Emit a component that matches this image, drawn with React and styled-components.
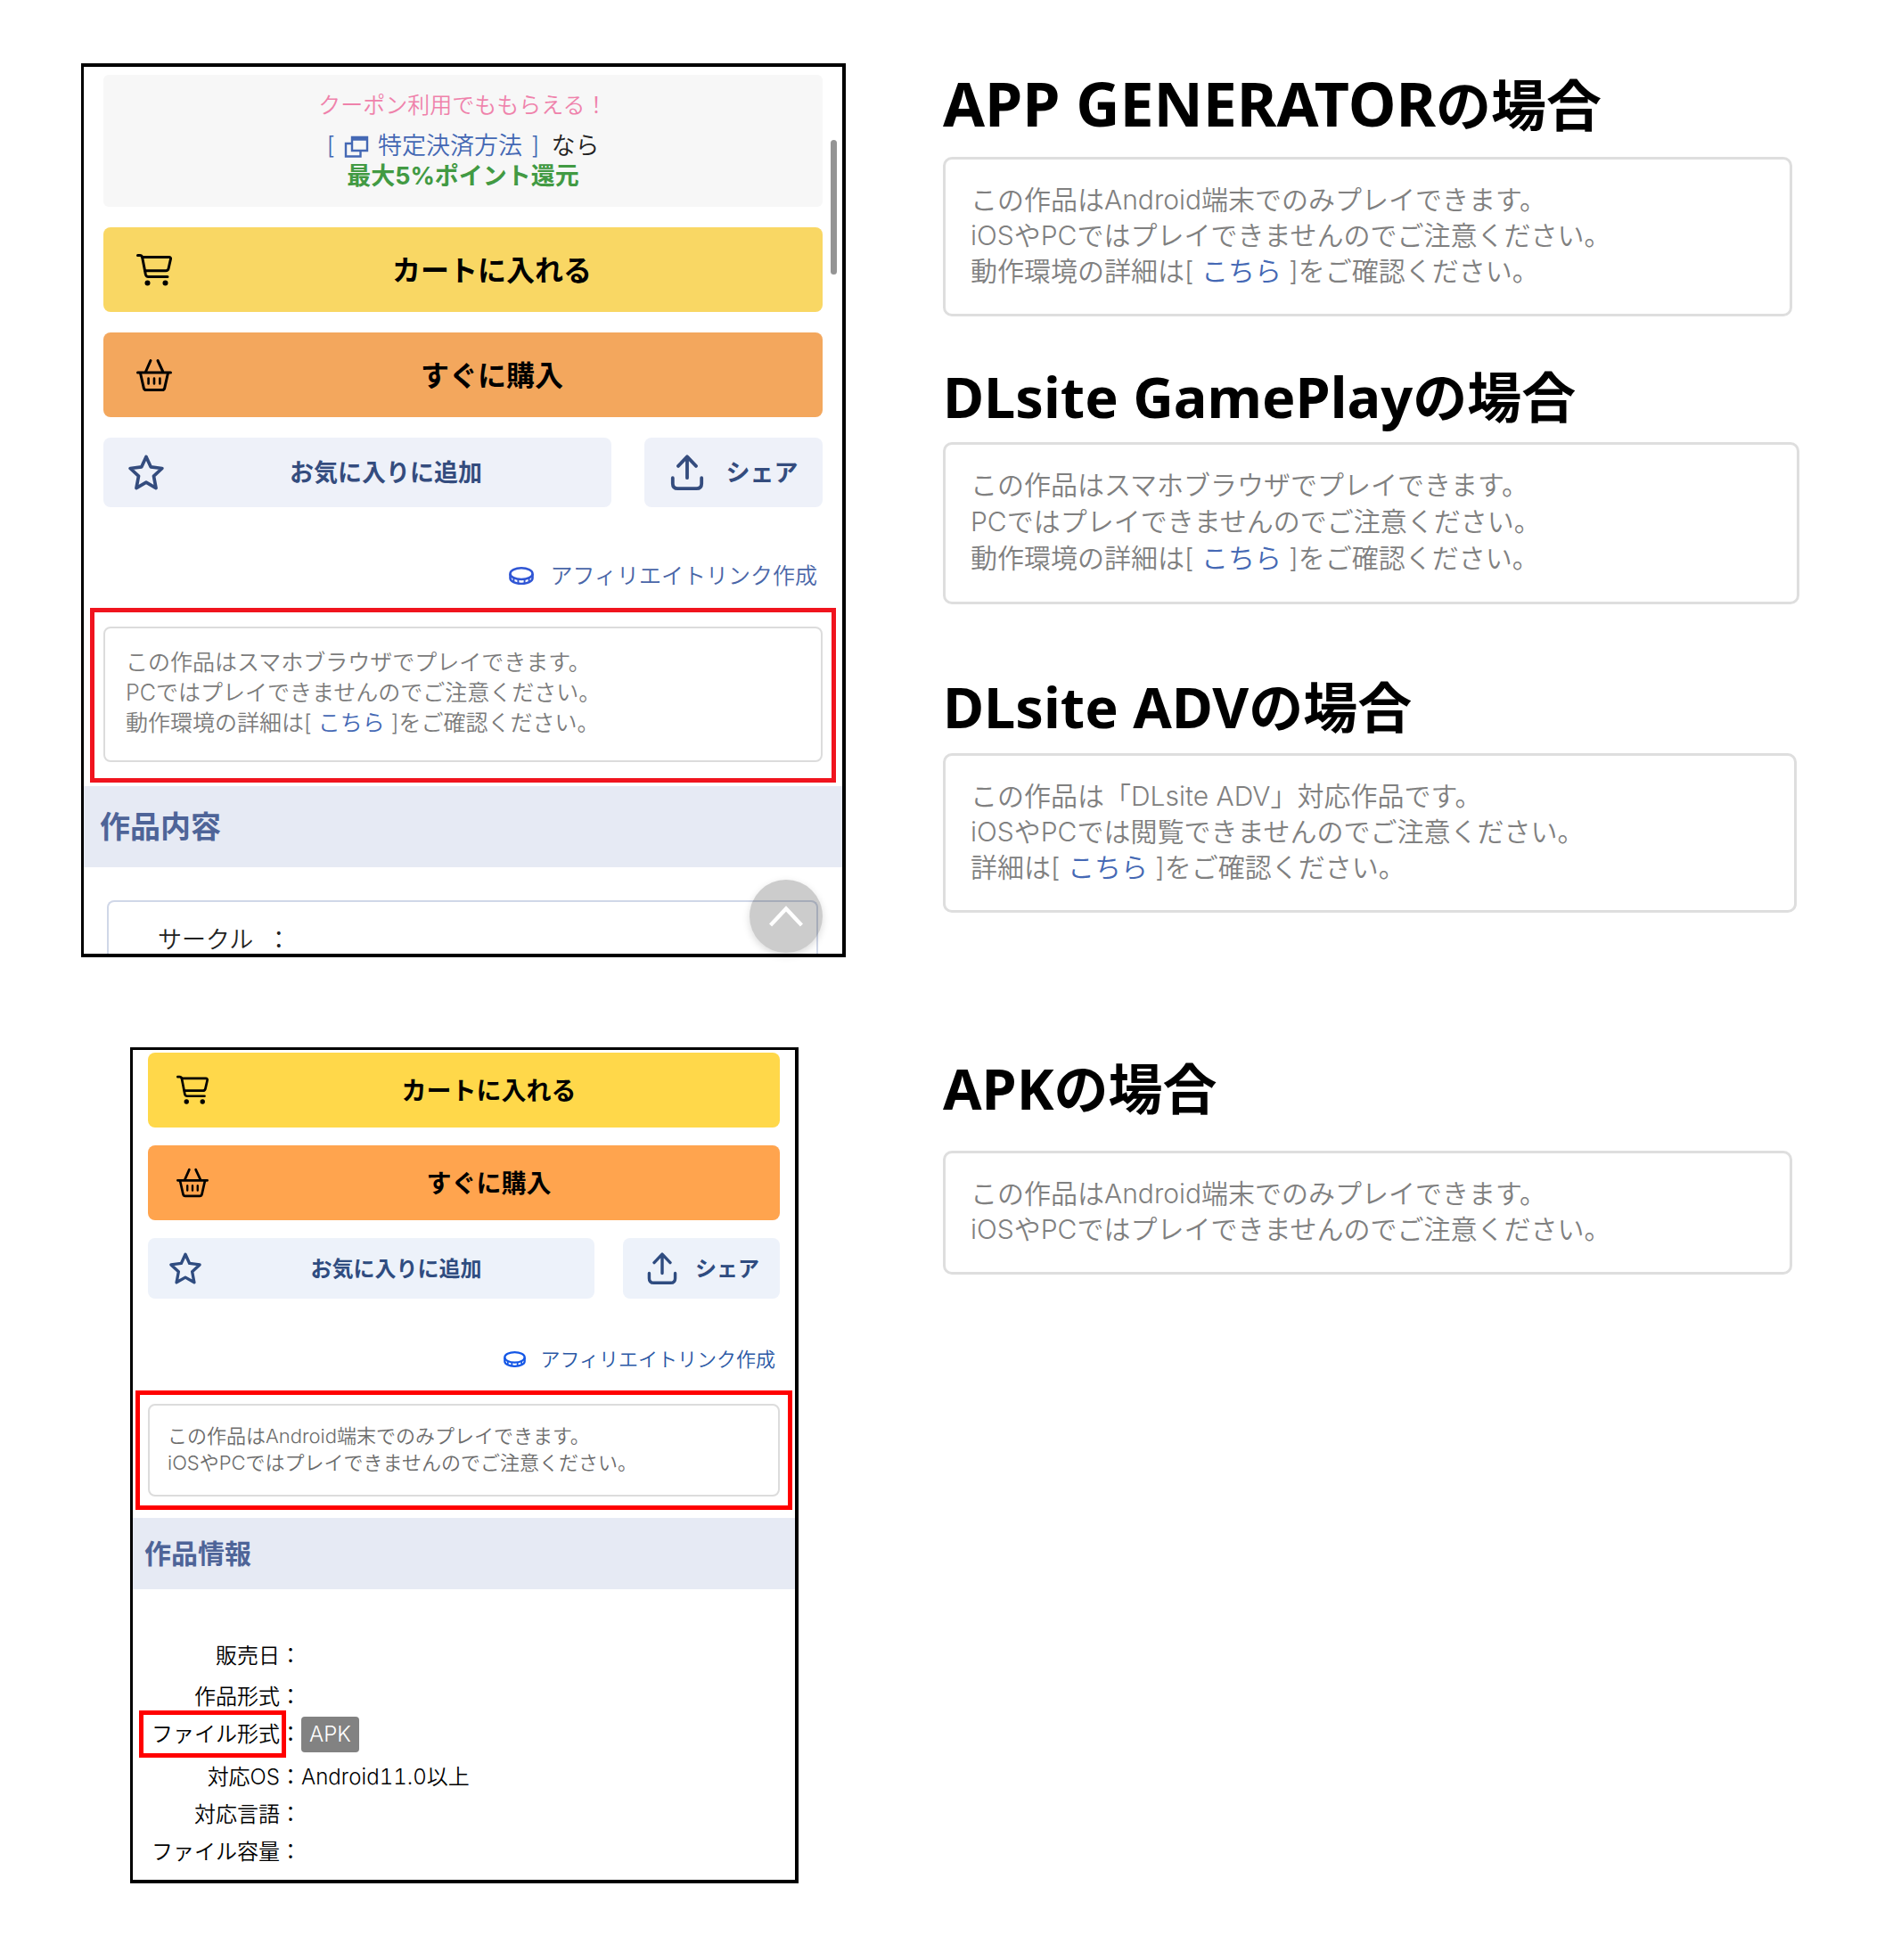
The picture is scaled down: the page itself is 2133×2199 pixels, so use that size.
import styled, { createGlobalStyle, ThemeProvider } from 'styled-components';

const large = {
    gap: 23,
    padTop: 9,
    padSide: 22,
    buy: 95,
    sub: 78,
    share: 200,
    subGap: 37,
    label: 32,
    text: 27,
    small: 25,
    line: 34,
    icon: 40,
    cartPad: 37,
    starPad: 28,
    sharePad: 28,
    linkMargin: '60px 28px 19px',
    linkGap: 18,
    coinWidth: 28,
    markMargin: '0 7px',
    markPad: '16px 10px 18px',
    notePad: '21px 23px 25px',
    bandTop: 4,
    band: 91,
    bandText: 34,
    yellow: '#f9d764',
    orange: '#f3a75d',
    pale: '#eef1f9',
    navy: '#344c7e',
    link: '#4a66a8',
    coin: '#2f55d4',
    red: '#f0141e',
    note: '#7b7b7b',
};

const small = {
    gap: 20,
    padTop: 3,
    padSide: 17,
    buy: 84,
    sub: 68,
    share: 176,
    subGap: 32,
    label: 28,
    text: 24,
    small: 22,
    line: 30,
    icon: 36,
    cartPad: 32,
    starPad: 24,
    sharePad: 26,
    linkMargin: '53px 22px 20px',
    linkGap: 16,
    coinWidth: 25,
    markMargin: '0 3px',
    markPad: '10px 9px',
    notePad: '19px 20px 21px',
    bandTop: 9,
    band: 80,
    bandText: 30,
    yellow: '#ffd84a',
    orange: '#ffa44e',
    pale: '#edf2fa',
    navy: '#2f4c80',
    link: '#2a58a5',
    coin: '#1457e6',
    red: '#ff0000',
    note: '#6c6c6c',
};

const detalhes = [
    { label: '販売日', space: 4 },
    { label: '作品形式' },
    { label: 'ファイル形式', badge: 'APK', marked: true, space: 6 },
    { label: '対応OS', value: 'Android11.0以上' },
    { label: '対応言語' },
    { label: 'ファイル容量' },
];

function CartIcon() {
    return (
        <Icon viewBox="0 0 40 36" fill="none" stroke="currentColor" strokeWidth="3" strokeLinecap="round" strokeLinejoin="round">
            <path d="M1.5 1.5H4Q6 1.5 6.6 3.5H36.5Q39 3.5 38.4 6L36 16.5Q35.5 18.8 33 18.8H10" />
            <path d="M6.6 3.5L10.4 23Q11 25.5 13.5 25.5H35" />
            <circle cx="12.5" cy="32.5" r="3" fill="currentColor" stroke="none" />
            <circle cx="32.5" cy="32.5" r="3" fill="currentColor" stroke="none" />
        </Icon>
    );
}

function BasketIcon() {
    return (
        <Icon viewBox="0 0 40 36" fill="none" stroke="currentColor" strokeWidth="3" strokeLinecap="round" strokeLinejoin="round">
            <path d="M1.5 15H38.5M16 1.5L10.5 14M24 1.5L29.8 14" />
            <path d="M4.5 15.5L8.3 32.3Q8.8 34.5 11 34.5H29Q31.2 34.5 31.7 32.3L35.5 15.5" />
            <path d="M13.6 21.5V27.5M20 21.5V27.5M26.4 21.5V27.5" strokeWidth="2.6" />
        </Icon>
    );
}

function StarIcon() {
    return (
        <Icon viewBox="0 0 41 41" fill="none" stroke="currentColor" strokeWidth="3.8" strokeLinejoin="round">
            <path d="M20.5 2.5L25.8 14.2L38.8 15.9L29.2 24.8L31.8 38.5L20.5 32L9.2 38.5L11.8 24.8L2.2 15.9L15.2 14.2Z" />
        </Icon>
    );
}

function ShareIcon() {
    return (
        <Icon viewBox="0 0 38 42" fill="none" stroke="currentColor" strokeWidth="4" strokeLinecap="round" strokeLinejoin="round">
            <path d="M19 27.5V2.5M8.5 13.5L19 2.5L29.5 13.5" />
            <path d="M2 27.5V34Q2 40 8 40H30Q36 40 36 34V27.5" />
        </Icon>
    );
}

function CoinIcon() {
    return (
        <Coin viewBox="0 0 29 21" fill="none" stroke="currentColor" strokeWidth="2.6">
            <ellipse cx="14.5" cy="8" rx="13" ry="6.6" />
            <path d="M1.5 8V13C1.5 17 7.5 19.6 14.5 19.6S27.5 17 27.5 13V8" />
            <path d="M5.6 13V17M10.8 14.5V19M18.2 14.5V19M23.4 13V17" strokeWidth="2" />
        </Coin>
    );
}

function WindowIcon() {
    return (
        <PopIcon viewBox="0 0 28 25" fill="none" stroke="currentColor" strokeWidth="2.4">
            <path d="M9 2H26V17H9Z" />
            <path d="M8 3.5H27" strokeWidth="4.5" />
            <path d="M8 9H2V23.5H18.5V18" />
        </PopIcon>
    );
}

function Compra() {
    return (
        <>
            <BuyButton type="button" $color="yellow"><CartIcon /><span>カートに入れる</span></BuyButton>
            <BuyButton type="button" $color="orange"><BasketIcon /><span>すぐに購入</span></BuyButton>
            <SubRow>
                <FavButton type="button"><StarIcon /><span>お気に入りに追加</span></FavButton>
                <ShareButton type="button"><ShareIcon /><span>シェア</span></ShareButton>
            </SubRow>
        </>
    );
}

function Afiliado() {
    return <AffiliateLink href="#affiliate"><CoinIcon />アフィリエイトリンク作成</AffiliateLink>;
}

function Kochira() {
    return <>[ <a href="#environment">こちら</a> ]</>;
}

function BrowserNote() {
    return (
        <>
            この作品はスマホブラウザでプレイできます。<br />
            PCではプレイできませんのでご注意ください。<br />
            動作環境の詳細は<Kochira />をご確認ください。
        </>
    );
}

function AndroidNote() {
    return (
        <>
            この作品はAndroid端末でのみプレイできます。<br />
            iOSやPCではプレイできませんのでご注意ください。
        </>
    );
}

export default function App() {
    return (
        <Page>
            <GlobalStyle />
            <ThemeProvider theme={large}>
                <Panel>
                    <Body>
                        <Coupon>
                            <Pink>クーポン利用でももらえる！</Pink>
                            <Method>
                                <MethodLink href="#payment">
                                    <span>[</span><WindowIcon /><span>特定決済方法</span><span>]</span>
                                </MethodLink>
                                <span>なら</span>
                            </Method>
                            <Green>最大5%ポイント還元</Green>
                        </Coupon>
                        <Compra />
                    </Body>
                    <Afiliado />
                    <Mark><Note><BrowserNote /></Note></Mark>
                    <Band>作品内容</Band>
                    <Circle><span>サークル</span><span>：</span></Circle>
                    <ScrollThumb />
                    <TopButton type="button" aria-label="ページの先頭へ">
                        <svg width="38" height="24" viewBox="0 0 38 24" fill="none" stroke="#fff" strokeWidth="4.4">
                            <path d="M1.5 22L19 3.5L36.5 22" />
                        </svg>
                    </TopButton>
                </Panel>
            </ThemeProvider>

            <Cases>
                <Title $big><Latin $big>APP GENERATOR</Latin>の場合</Title>
                <CaseNote $top={25} $right={8}>
                    <AndroidNote /><br />
                    動作環境の詳細は<Kochira />をご確認ください。
                </CaseNote>
                <Title $top={52}><Latin>DLsite GamePlay</Latin>の場合</Title>
                <CaseNote $top={17} $right={0} $loose><BrowserNote /></CaseNote>
                <Title $top={77}><Latin>DLsite ADV</Latin>の場合</Title>
                <CaseNote $top={18} $right={3}>
                    この作品は「DLsite ADV」対応作品です。<br />
                    iOSやPCでは閲覧できませんのでご注意ください。<br />
                    詳細は<Kochira />をご確認ください。
                </CaseNote>
            </Cases>

            <ThemeProvider theme={small}>
                <Panel $inset>
                    <Body><Compra /></Body>
                    <Afiliado />
                    <Mark><Note><AndroidNote /></Note></Mark>
                    <Band>作品情報</Band>
                    <Details>
                        <tbody>
                            {detalhes.map((item) => (
                                <Row key={item.label} $space={item.space || 0}>
                                    <th scope="row"><Label $marked={item.marked}>{item.label}</Label>：</th>
                                    <td>{item.badge ? <Badge>{item.badge}</Badge> : item.value}</td>
                                </Row>
                            ))}
                        </tbody>
                    </Details>
                </Panel>
            </ThemeProvider>

            <Cases>
                <Title><Latin>APK</Latin>の場合</Title>
                <CaseNote $top={36} $right={8}><AndroidNote /></CaseNote>
            </Cases>
        </Page>
    );
}

const GlobalStyle = createGlobalStyle`
    * {
        box-sizing: border-box;
    }
    body {
        margin: 0;
        background: #fff;
        color: #000;
        font-family: Inter, "Noto Sans CJK JP", sans-serif;
        font-weight: 350;
    }
    a {
        color: #4468b4;
        text-decoration: none;
    }
    button {
        border: 0;
        padding: 0;
        font-family: inherit;
        cursor: pointer;
    }
`

const Page = styled.main`
    display: grid;
    grid-template-columns: minmax(0, 858fr) minmax(0, 961fr);
    column-gap: 109px;
    row-gap: 101px;
    align-items: start;
    padding: 71px 114px 86px 91px;
`

const Panel = styled.section`
    position: relative;
    margin: ${(p) => (p.$inset ? '0 53px 0 55px' : '0')};
    border: 4px solid #000;
    border-left-width: 3px;
    border-top-width: ${(p) => (p.$inset ? '3px' : '4px')};
    background: #fff;
`

const Body = styled.div`
    display: flex;
    flex-direction: column;
    gap: ${(p) => p.theme.gap}px;
    padding: ${(p) => p.theme.padTop}px ${(p) => p.theme.padSide}px 0;
`

const Coupon = styled.div`
    background: #f7f7f7;
    border-radius: 6px;
    padding: 17px 0;
    text-align: center;
    font-size: 27px;
    line-height: 34px;
`

const Pink = styled.div`
    font-size: 25px;
    color: #ef82ab;
`

const Method = styled.div`
    display: flex;
    justify-content: center;
    gap: 13px;
    margin-top: 12px;
    color: #222;
`

const MethodLink = styled.a`
    display: flex;
    align-items: center;
    gap: 10px;
`

const Green = styled.div`
    font-weight: 700;
    color: #429a43;
`

const PopIcon = styled.svg`
    width: 28px;
    height: 25px;
`

const Icon = styled.svg`
    flex: none;
    width: ${(p) => p.theme.icon}px;
    height: ${(p) => p.theme.icon}px;
`

const Action = styled.button`
    display: flex;
    align-items: center;
    border-radius: 8px;
    white-space: nowrap;

    span {
        flex: 1;
        padding-bottom: 3px;
        text-align: center;
    }
`

const BuyButton = styled(Action)`
    height: ${(p) => p.theme.buy}px;
    padding: 0 12px 0 ${(p) => p.theme.cartPad}px;
    background: ${(p) => p.theme[p.$color]};
    color: #000;
    font-size: ${(p) => p.theme.label}px;
    font-weight: 700;
`

const SubRow = styled.div`
    display: flex;
    gap: ${(p) => p.theme.subGap}px;
`

const FavButton = styled(Action)`
    flex: 1;
    height: ${(p) => p.theme.sub}px;
    padding: 0 4px 0 ${(p) => p.theme.starPad}px;
    background: ${(p) => p.theme.pale};
    color: ${(p) => p.theme.navy};
    font-size: ${(p) => p.theme.text}px;
    font-weight: 700;
`

const ShareButton = styled(FavButton)`
    flex: none;
    width: ${(p) => p.theme.share}px;
    padding-left: ${(p) => p.theme.sharePad}px;
`

const AffiliateLink = styled.a`
    display: flex;
    justify-content: flex-end;
    align-items: center;
    gap: ${(p) => p.theme.linkGap}px;
    margin: ${(p) => p.theme.linkMargin};
    font-size: ${(p) => p.theme.small}px;
    line-height: ${(p) => p.theme.line}px;
    color: ${(p) => p.theme.link};
`

const Coin = styled.svg`
    width: ${(p) => p.theme.coinWidth}px;
    color: ${(p) => p.theme.coin};
`

const Mark = styled.div`
    margin: ${(p) => p.theme.markMargin};
    border: 5px solid ${(p) => p.theme.red};
    padding: ${(p) => p.theme.markPad};
`

const Note = styled.p`
    margin: 0;
    border: 2px solid #dcdcdc;
    border-radius: 8px;
    padding: ${(p) => p.theme.notePad};
    font-size: ${(p) => p.theme.small}px;
    line-height: ${(p) => p.theme.line}px;
    color: ${(p) => p.theme.note};
`

const Band = styled.h3`
    margin: ${(p) => p.theme.bandTop}px 0 0;
    padding-left: ${(p) => p.theme.padSide - 4}px;
    background: #e6eaf4;
    color: #4e6498;
    font-size: ${(p) => p.theme.bandText}px;
    font-weight: 700;
    line-height: ${(p) => p.theme.band}px;
`

const Circle = styled.div`
    display: flex;
    gap: 15px;
    margin: 37px 27px 0 26px;
    height: 60px;
    border: 2px solid #d0d7e8;
    border-bottom: 0;
    border-radius: 8px 8px 0 0;
    padding: 27px 0 0 55px;
    font-size: 27px;
    line-height: 32px;
    color: #222;
`

const ScrollThumb = styled.div`
    position: absolute;
    top: 82px;
    right: 6px;
    width: 7px;
    height: 151px;
    border-radius: 4px;
    background: #949494;
`

const TopButton = styled.button`
    position: absolute;
    right: 22px;
    bottom: 1px;
    display: flex;
    align-items: center;
    justify-content: center;
    width: 82px;
    height: 82px;
    border-radius: 50%;
    background: rgba(0, 0, 0, 0.2);
    box-shadow: 0 3px 8px rgba(0, 0, 0, 0.15);
`

const Details = styled.table`
    width: 100%;
    margin: 54px 0 10px;
    border-collapse: collapse;
    font-size: 24px;
    line-height: 42px;
    font-variant-numeric: tabular-nums;
    font-kerning: none;
`

const Row = styled.tr`
    th, td {
        height: ${(p) => 42 + p.$space}px;
        padding: 0;
        vertical-align: top;
        font-weight: 350;
        white-space: nowrap;
    }
    th {
        width: 189px;
        text-align: right;
    }
`

const Label = styled.span`
    position: relative;

    &::after {
        content: "";
        display: ${(p) => (p.$marked ? 'block' : 'none')};
        position: absolute;
        inset: -12px -7px -12px -14px;
        border: 5px solid #f00;
    }
`

const Badge = styled.span`
    display: inline-block;
    padding: 0 9px;
    border-radius: 4px;
    background: #828282;
    color: #fff;
    line-height: 40px;
`

const Cases = styled.section`
    padding-top: 8px;
`

const Title = styled.h2`
    margin: ${(p) => p.$top || 0}px 0 0;
    font-family: "Noto Sans CJK JP", sans-serif;
    font-size: ${(p) => (p.$big ? 62 : 61)}px;
    font-weight: 700;
    line-height: 72px;
    white-space: nowrap;
`

const Latin = styled.span`
    font-family: "Noto Sans", sans-serif;
    font-size: ${(p) => (p.$big ? 68 : 63)}px;
    line-height: 1;
`

const CaseNote = styled.p`
    margin: ${(p) => p.$top}px ${(p) => p.$right}px 0 0;
    border: 3px solid #dedede;
    border-radius: 10px;
    padding: 25px 28px 28px;
    font-size: 30px;
    line-height: ${(p) => (p.$loose ? 41 : 40)}px;
    color: #808080;
`
